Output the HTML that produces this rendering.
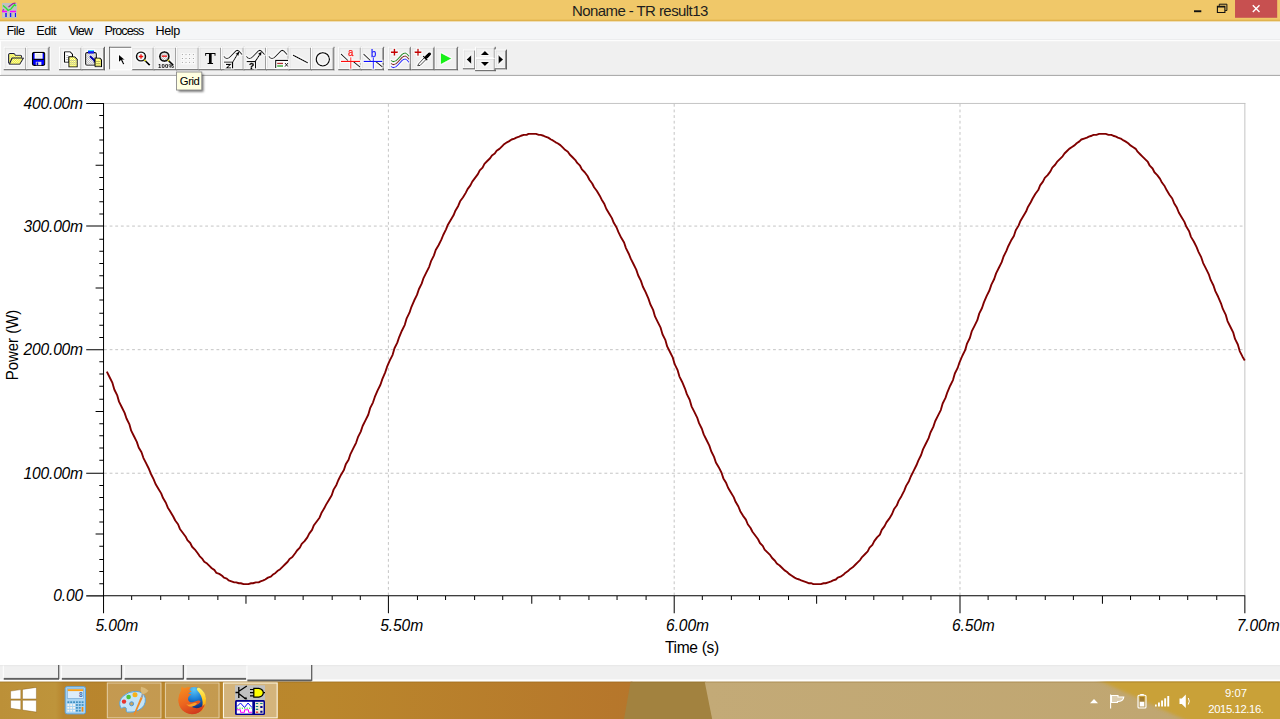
<!DOCTYPE html>
<html><head><meta charset="utf-8"><title>Noname - TR result13</title>
<style>
*{box-sizing:border-box;margin:0;padding:0}
html,body{width:1280px;height:719px;overflow:hidden;background:#fff;font-family:"Liberation Sans",sans-serif}
#art{position:absolute;left:0;top:0}
.t{position:absolute;white-space:nowrap;color:#000;line-height:1}
.t span{display:inline-block;transform-origin:0 50%}
#ttext{left:572px;top:2.5px;font-size:15px;color:#1e1e1e}
.m{top:24.5px;font-size:12.6px}
.yl{position:absolute;left:0;width:82.9px;text-align:right;font-style:italic;font-size:15.6px;line-height:18px;color:#000;letter-spacing:-.2px}
.xl{position:absolute;top:617.3px;font-style:italic;font-size:15.6px;line-height:18px;color:#000;letter-spacing:-.12px}
#xt{position:absolute;left:665px;top:639px;font-size:15.6px;line-height:18px;letter-spacing:-.35px}
#yt{position:absolute;left:-27px;top:336px;width:80px;text-align:center;font-size:16px;line-height:18px;transform:rotate(-90deg) scaleX(.93)}
#tip{left:179.8px;top:75.5px;font-size:11.3px;letter-spacing:-.45px}
#pct{left:158px;top:63.4px;font-size:6px;font-weight:bold;letter-spacing:.15px;opacity:.999}
.ab{font-size:10.5px;top:46.9px;opacity:.999;-webkit-text-stroke:.25px currentColor}
.q{font-size:8.5px;font-weight:bold;opacity:.999;-webkit-text-stroke:.3px #000}
#c1{left:1225px;top:687.7px;font-size:11.3px;color:#fff}
#c2{left:1208.3px;top:704.3px;font-size:11.3px;color:#fff;letter-spacing:-.4px}
</style></head><body>
<svg id="art" width="1280" height="719" viewBox="0 0 1280 719"><g transform="scale(0.937042,0.936198)"><rect x="0" y="0" width="1366" height="23" fill="#f0c869"/><rect x="0" y="21" width="1366" height="2" fill="#e0b34e"/><rect x="0" y="23" width="1366" height="20" fill="#f5f6f7"/><rect x="0" y="42" width="1366" height="1" fill="#e8e9ea"/><rect x="0" y="43" width="1366" height="1" fill="#ffffff"/><rect x="0" y="44" width="1366" height="37" fill="#f0f0f0"/><rect x="0" y="80" width="1366" height="1" fill="#a0a0a0"/><rect x="0" y="44" width="1" height="36" fill="#ffffff"/><rect x="1318" y="0" width="45" height="19" fill="#c75050"/><rect x="4" y="50" width="25" height="25" fill="#f0f0f0"/><rect x="4" y="50" width="24" height="1" fill="#ffffff"/><rect x="4" y="50" width="1" height="24" fill="#ffffff"/><rect x="5" y="51" width="22" height="1" fill="#e2e2e2"/><rect x="5" y="51" width="1" height="22" fill="#e2e2e2"/><rect x="5" y="73" width="22" height="1" fill="#fcfcfc"/><rect x="27" y="51" width="1" height="23" fill="#8a8a8a"/><rect x="4" y="74" width="25" height="1" fill="#505050"/><rect x="28" y="50" width="1" height="25" fill="#5a5a5a"/><rect x="28" y="50" width="25" height="25" fill="#f0f0f0"/><rect x="28" y="50" width="24" height="1" fill="#ffffff"/><rect x="28" y="50" width="1" height="24" fill="#ffffff"/><rect x="29" y="51" width="22" height="1" fill="#e2e2e2"/><rect x="29" y="51" width="1" height="22" fill="#e2e2e2"/><rect x="29" y="73" width="22" height="1" fill="#fcfcfc"/><rect x="51" y="51" width="1" height="23" fill="#8a8a8a"/><rect x="28" y="74" width="25" height="1" fill="#505050"/><rect x="52" y="50" width="1" height="25" fill="#5a5a5a"/><rect x="53" y="51" width="1" height="24" fill="#ffffff"/><rect x="63" y="50" width="25" height="25" fill="#f0f0f0"/><rect x="63" y="50" width="24" height="1" fill="#ffffff"/><rect x="63" y="50" width="1" height="24" fill="#ffffff"/><rect x="64" y="51" width="22" height="1" fill="#e2e2e2"/><rect x="64" y="51" width="1" height="22" fill="#e2e2e2"/><rect x="64" y="73" width="22" height="1" fill="#fcfcfc"/><rect x="86" y="51" width="1" height="23" fill="#8a8a8a"/><rect x="63" y="74" width="25" height="1" fill="#505050"/><rect x="87" y="50" width="1" height="25" fill="#5a5a5a"/><rect x="87" y="50" width="25" height="25" fill="#f0f0f0"/><rect x="87" y="50" width="24" height="1" fill="#ffffff"/><rect x="87" y="50" width="1" height="24" fill="#ffffff"/><rect x="88" y="51" width="22" height="1" fill="#e2e2e2"/><rect x="88" y="51" width="1" height="22" fill="#e2e2e2"/><rect x="88" y="73" width="22" height="1" fill="#fcfcfc"/><rect x="110" y="51" width="1" height="23" fill="#8a8a8a"/><rect x="87" y="74" width="25" height="1" fill="#505050"/><rect x="111" y="50" width="1" height="25" fill="#5a5a5a"/><rect x="112" y="51" width="1" height="24" fill="#ffffff"/><rect x="140" y="50" width="25" height="25" fill="#f0f0f0"/><rect x="140" y="50" width="24" height="1" fill="#ffffff"/><rect x="140" y="50" width="1" height="24" fill="#ffffff"/><rect x="141" y="51" width="22" height="1" fill="#e2e2e2"/><rect x="141" y="51" width="1" height="22" fill="#e2e2e2"/><rect x="141" y="73" width="22" height="1" fill="#fcfcfc"/><rect x="163" y="51" width="1" height="23" fill="#8a8a8a"/><rect x="140" y="74" width="25" height="1" fill="#505050"/><rect x="164" y="50" width="1" height="25" fill="#5a5a5a"/><rect x="164" y="50" width="25" height="25" fill="#f0f0f0"/><rect x="164" y="50" width="24" height="1" fill="#ffffff"/><rect x="164" y="50" width="1" height="24" fill="#ffffff"/><rect x="165" y="51" width="22" height="1" fill="#e2e2e2"/><rect x="165" y="51" width="1" height="22" fill="#e2e2e2"/><rect x="165" y="73" width="22" height="1" fill="#fcfcfc"/><rect x="187" y="51" width="1" height="23" fill="#8a8a8a"/><rect x="164" y="74" width="25" height="1" fill="#505050"/><rect x="188" y="50" width="1" height="25" fill="#5a5a5a"/><rect x="188" y="50" width="25" height="25" fill="#f0f0f0"/><rect x="188" y="50" width="24" height="1" fill="#ffffff"/><rect x="188" y="50" width="1" height="24" fill="#ffffff"/><rect x="189" y="51" width="22" height="1" fill="#e2e2e2"/><rect x="189" y="51" width="1" height="22" fill="#e2e2e2"/><rect x="189" y="73" width="22" height="1" fill="#fcfcfc"/><rect x="211" y="51" width="1" height="23" fill="#8a8a8a"/><rect x="188" y="74" width="25" height="1" fill="#505050"/><rect x="212" y="50" width="1" height="25" fill="#5a5a5a"/><rect x="212" y="50" width="25" height="25" fill="#f0f0f0"/><rect x="212" y="50" width="24" height="1" fill="#ffffff"/><rect x="212" y="50" width="1" height="24" fill="#ffffff"/><rect x="213" y="51" width="22" height="1" fill="#e2e2e2"/><rect x="213" y="51" width="1" height="22" fill="#e2e2e2"/><rect x="213" y="73" width="22" height="1" fill="#fcfcfc"/><rect x="235" y="51" width="1" height="23" fill="#8a8a8a"/><rect x="212" y="74" width="25" height="1" fill="#505050"/><rect x="236" y="50" width="1" height="25" fill="#5a5a5a"/><rect x="236" y="50" width="25" height="25" fill="#f0f0f0"/><rect x="236" y="50" width="24" height="1" fill="#ffffff"/><rect x="236" y="50" width="1" height="24" fill="#ffffff"/><rect x="237" y="51" width="22" height="1" fill="#e2e2e2"/><rect x="237" y="51" width="1" height="22" fill="#e2e2e2"/><rect x="237" y="73" width="22" height="1" fill="#fcfcfc"/><rect x="259" y="51" width="1" height="23" fill="#8a8a8a"/><rect x="236" y="74" width="25" height="1" fill="#505050"/><rect x="260" y="50" width="1" height="25" fill="#5a5a5a"/><rect x="260" y="50" width="25" height="25" fill="#f0f0f0"/><rect x="260" y="50" width="24" height="1" fill="#ffffff"/><rect x="260" y="50" width="1" height="24" fill="#ffffff"/><rect x="261" y="51" width="22" height="1" fill="#e2e2e2"/><rect x="261" y="51" width="1" height="22" fill="#e2e2e2"/><rect x="261" y="73" width="22" height="1" fill="#fcfcfc"/><rect x="283" y="51" width="1" height="23" fill="#8a8a8a"/><rect x="260" y="74" width="25" height="1" fill="#505050"/><rect x="284" y="50" width="1" height="25" fill="#5a5a5a"/><rect x="284" y="50" width="25" height="25" fill="#f0f0f0"/><rect x="284" y="50" width="24" height="1" fill="#ffffff"/><rect x="284" y="50" width="1" height="24" fill="#ffffff"/><rect x="285" y="51" width="22" height="1" fill="#e2e2e2"/><rect x="285" y="51" width="1" height="22" fill="#e2e2e2"/><rect x="285" y="73" width="22" height="1" fill="#fcfcfc"/><rect x="307" y="51" width="1" height="23" fill="#8a8a8a"/><rect x="284" y="74" width="25" height="1" fill="#505050"/><rect x="308" y="50" width="1" height="25" fill="#5a5a5a"/><rect x="308" y="50" width="25" height="25" fill="#f0f0f0"/><rect x="308" y="50" width="24" height="1" fill="#ffffff"/><rect x="308" y="50" width="1" height="24" fill="#ffffff"/><rect x="309" y="51" width="22" height="1" fill="#e2e2e2"/><rect x="309" y="51" width="1" height="22" fill="#e2e2e2"/><rect x="309" y="73" width="22" height="1" fill="#fcfcfc"/><rect x="331" y="51" width="1" height="23" fill="#8a8a8a"/><rect x="308" y="74" width="25" height="1" fill="#505050"/><rect x="332" y="50" width="1" height="25" fill="#5a5a5a"/><rect x="332" y="50" width="25" height="25" fill="#f0f0f0"/><rect x="332" y="50" width="24" height="1" fill="#ffffff"/><rect x="332" y="50" width="1" height="24" fill="#ffffff"/><rect x="333" y="51" width="22" height="1" fill="#e2e2e2"/><rect x="333" y="51" width="1" height="22" fill="#e2e2e2"/><rect x="333" y="73" width="22" height="1" fill="#fcfcfc"/><rect x="355" y="51" width="1" height="23" fill="#8a8a8a"/><rect x="332" y="74" width="25" height="1" fill="#505050"/><rect x="356" y="50" width="1" height="25" fill="#5a5a5a"/><rect x="357" y="51" width="1" height="24" fill="#ffffff"/><rect x="361" y="50" width="25" height="25" fill="#f0f0f0"/><rect x="361" y="50" width="24" height="1" fill="#ffffff"/><rect x="361" y="50" width="1" height="24" fill="#ffffff"/><rect x="362" y="51" width="22" height="1" fill="#e2e2e2"/><rect x="362" y="51" width="1" height="22" fill="#e2e2e2"/><rect x="362" y="73" width="22" height="1" fill="#fcfcfc"/><rect x="384" y="51" width="1" height="23" fill="#8a8a8a"/><rect x="361" y="74" width="25" height="1" fill="#505050"/><rect x="385" y="50" width="1" height="25" fill="#5a5a5a"/><rect x="385" y="50" width="25" height="25" fill="#f0f0f0"/><rect x="385" y="50" width="24" height="1" fill="#ffffff"/><rect x="385" y="50" width="1" height="24" fill="#ffffff"/><rect x="386" y="51" width="22" height="1" fill="#e2e2e2"/><rect x="386" y="51" width="1" height="22" fill="#e2e2e2"/><rect x="386" y="73" width="22" height="1" fill="#fcfcfc"/><rect x="408" y="51" width="1" height="23" fill="#8a8a8a"/><rect x="385" y="74" width="25" height="1" fill="#505050"/><rect x="409" y="50" width="1" height="25" fill="#5a5a5a"/><rect x="410" y="51" width="1" height="24" fill="#ffffff"/><rect x="414" y="50" width="25" height="25" fill="#f0f0f0"/><rect x="414" y="50" width="24" height="1" fill="#ffffff"/><rect x="414" y="50" width="1" height="24" fill="#ffffff"/><rect x="415" y="51" width="22" height="1" fill="#e2e2e2"/><rect x="415" y="51" width="1" height="22" fill="#e2e2e2"/><rect x="415" y="73" width="22" height="1" fill="#fcfcfc"/><rect x="437" y="51" width="1" height="23" fill="#8a8a8a"/><rect x="414" y="74" width="25" height="1" fill="#505050"/><rect x="438" y="50" width="1" height="25" fill="#5a5a5a"/><rect x="439" y="50" width="25" height="25" fill="#f0f0f0"/><rect x="439" y="50" width="24" height="1" fill="#ffffff"/><rect x="439" y="50" width="1" height="24" fill="#ffffff"/><rect x="440" y="51" width="22" height="1" fill="#e2e2e2"/><rect x="440" y="51" width="1" height="22" fill="#e2e2e2"/><rect x="440" y="73" width="22" height="1" fill="#fcfcfc"/><rect x="462" y="51" width="1" height="23" fill="#8a8a8a"/><rect x="439" y="74" width="25" height="1" fill="#505050"/><rect x="463" y="50" width="1" height="25" fill="#5a5a5a"/><rect x="464" y="50" width="25" height="25" fill="#f0f0f0"/><rect x="464" y="50" width="24" height="1" fill="#ffffff"/><rect x="464" y="50" width="1" height="24" fill="#ffffff"/><rect x="465" y="51" width="22" height="1" fill="#e2e2e2"/><rect x="465" y="51" width="1" height="22" fill="#e2e2e2"/><rect x="465" y="73" width="22" height="1" fill="#fcfcfc"/><rect x="487" y="51" width="1" height="23" fill="#8a8a8a"/><rect x="464" y="74" width="25" height="1" fill="#505050"/><rect x="488" y="50" width="1" height="25" fill="#5a5a5a"/><rect x="489" y="51" width="1" height="24" fill="#ffffff"/><rect x="116.6" y="50" width="24.4" height="25" fill="#f8f8f8"/><rect x="116.6" y="50" width="23.4" height="1.1" fill="#505050"/><rect x="116.6" y="50" width="1.15" height="24" fill="#505050"/><rect x="117.6" y="51" width="22.4" height="1" fill="#ffffff"/><rect x="117.6" y="51" width="1" height="23" fill="#ffffff"/><rect x="117.6" y="74" width="23.4" height="1" fill="#ffffff"/><rect x="140" y="51" width="1" height="24" fill="#ffffff"/><rect x="494" y="53" width="14" height="21" fill="#f0f0f0"/><rect x="494" y="53" width="13" height="1" fill="#ffffff"/><rect x="494" y="53" width="1" height="20" fill="#ffffff"/><rect x="495" y="54" width="11" height="1" fill="#e2e2e2"/><rect x="495" y="54" width="1" height="18" fill="#e2e2e2"/><rect x="495" y="72" width="11" height="1" fill="#fcfcfc"/><rect x="506" y="54" width="1" height="19" fill="#8a8a8a"/><rect x="494" y="73" width="14" height="1" fill="#505050"/><rect x="507" y="53" width="1" height="21" fill="#5a5a5a"/><rect x="507" y="50" width="22" height="13" fill="#f0f0f0"/><rect x="507" y="50" width="21" height="1" fill="#ffffff"/><rect x="507" y="50" width="1" height="12" fill="#ffffff"/><rect x="508" y="51" width="19" height="1" fill="#e2e2e2"/><rect x="508" y="51" width="1" height="10" fill="#e2e2e2"/><rect x="508" y="61" width="19" height="1" fill="#fcfcfc"/><rect x="527" y="51" width="1" height="11" fill="#8a8a8a"/><rect x="507" y="62" width="22" height="1" fill="#505050"/><rect x="528" y="50" width="1" height="13" fill="#5a5a5a"/><rect x="507" y="62" width="22" height="14" fill="#f0f0f0"/><rect x="507" y="62" width="21" height="1" fill="#ffffff"/><rect x="507" y="62" width="1" height="13" fill="#ffffff"/><rect x="508" y="63" width="19" height="1" fill="#e2e2e2"/><rect x="508" y="63" width="1" height="11" fill="#e2e2e2"/><rect x="508" y="74" width="19" height="1" fill="#fcfcfc"/><rect x="527" y="63" width="1" height="12" fill="#8a8a8a"/><rect x="507" y="75" width="22" height="1" fill="#505050"/><rect x="528" y="62" width="1" height="14" fill="#5a5a5a"/><rect x="528" y="53" width="13" height="21" fill="#f0f0f0"/><rect x="528" y="53" width="12" height="1" fill="#ffffff"/><rect x="528" y="53" width="1" height="20" fill="#ffffff"/><rect x="529" y="54" width="10" height="1" fill="#e2e2e2"/><rect x="529" y="54" width="1" height="18" fill="#e2e2e2"/><rect x="529" y="72" width="10" height="1" fill="#fcfcfc"/><rect x="539" y="54" width="1" height="19" fill="#8a8a8a"/><rect x="528" y="73" width="13" height="1" fill="#505050"/><rect x="540" y="53" width="1" height="21" fill="#5a5a5a"/><path d="M110 110.5H1329M1328.5 110V636" stroke="#c0c0c0" fill="none"/><path d="M111 505.5H1328M111 373.5H1328M111 241.5H1328M414.5 111V636M719.5 111V636M1024.5 111V636" stroke="#c0c0c0" stroke-dasharray="3 3" fill="none"/><path d="M110.5 110V655M92 636.35H1329M92 636.5H110M106 623.5H110M106 610.5H110M106 597.5H110M106 583.5H110M102 570.5H110M106 557.5H110M106 544.5H110M106 531.5H110M106 518.5H110M92 505.5H110M106 491.5H110M106 478.5H110M106 465.5H110M106 452.5H110M102 439.5H110M106 426.5H110M106 412.5H110M106 399.5H110M106 386.5H110M92 373.5H110M106 360.5H110M106 347.5H110M106 334.5H110M106 320.5H110M102 307.5H110M106 294.5H110M106 281.5H110M106 268.5H110M106 255.5H110M92 241.5H110M106 228.5H110M106 215.5H110M106 202.5H110M106 189.5H110M102 176.5H110M106 163.5H110M106 149.5H110M106 136.5H110M106 123.5H110M92 110.5H110M110.5 636V655M140.5 636V641M171.5 636V641M201.5 636V641M232.5 636V641M262.5 636V645M293.5 636V641M323.5 636V641M354.5 636V641M384.5 636V641M414.5 636V655M445.5 636V641M475.5 636V641M506.5 636V641M536.5 636V641M567.5 636V645M597.5 636V641M628.5 636V641M658.5 636V641M689.5 636V641M719.5 636V655M749.5 636V641M780.5 636V641M810.5 636V641M841.5 636V641M871.5 636V645M902.5 636V641M932.5 636V641M963.5 636V641M993.5 636V641M1024.5 636V655M1054.5 636V641M1084.5 636V641M1115.5 636V641M1145.5 636V641M1176.5 636V645M1206.5 636V641M1237.5 636V641M1267.5 636V641M1298.5 636V641M1328.5 636V655" stroke="#000" stroke-width="1.07" fill="none"/><path d="M114 397 L117 403 L120 409 L122 416 L125 422 L127 429 L130 435 L133 441 L135 447 L138 453 L140 460 L143 466 L146 472 L148 478 L151 483 L153 489 L156 495 L159 501 L161 506 L164 512 L166 517 L169 522 L172 527 L174 532 L177 537 L179 542 L182 547 L185 552 L187 556 L190 560 L192 565 L195 569 L198 573 L200 577 L203 580 L205 584 L208 587 L211 591 L213 594 L216 597 L218 600 L221 602 L224 605 L226 607 L229 609 L231 612 L234 613 L237 615 L239 617 L242 618 L244 620 L247 621 L250 622 L252 622 L255 623 L257 623 L260 624 L263 624 L265 624 L268 623 L270 623 L273 622 L276 622 L278 621 L281 620 L283 619 L286 617 L289 616 L291 614 L294 612 L296 610 L299 608 L302 605 L304 603 L307 600 L309 597 L312 595 L315 591 L317 588 L320 585 L322 581 L325 578 L328 574 L330 570 L333 566 L335 561 L338 557 L341 553 L343 548 L346 543 L348 539 L351 534 L354 529 L356 523 L359 518 L361 513 L364 507 L367 502 L369 496 L372 491 L374 485 L377 479 L380 473 L382 467 L385 461 L387 455 L390 449 L393 443 L395 436 L398 430 L400 424 L403 417 L406 411 L408 405 L411 398 L413 392 L416 385 L419 379 L421 372 L424 366 L426 360 L429 353 L432 347 L434 340 L437 334 L439 328 L442 321 L445 315 L447 309 L450 303 L452 297 L455 291 L458 285 L460 279 L463 273 L465 267 L468 262 L471 256 L473 251 L476 245 L478 240 L481 235 L484 230 L486 225 L489 220 L491 215 L494 211 L497 206 L499 202 L502 198 L504 194 L507 190 L510 186 L512 182 L515 179 L517 175 L520 172 L523 169 L525 166 L528 164 L530 161 L533 159 L536 156 L538 154 L541 152 L543 151 L546 149 L549 148 L551 147 L554 146 L556 145 L559 144 L562 144 L564 143 L567 143 L569 143 L572 143 L575 144 L577 144 L580 145 L582 146 L585 147 L588 149 L590 150 L593 152 L595 153 L598 155 L601 158 L603 160 L606 162 L608 165 L611 168 L614 171 L616 174 L619 177 L621 181 L624 184 L627 188 L629 192 L632 196 L634 200 L637 204 L640 209 L642 213 L645 218 L647 223 L650 228 L653 233 L655 238 L658 243 L660 248 L663 254 L666 259 L668 265 L671 271 L673 276 L676 282 L679 288 L681 294 L684 300 L686 306 L689 312 L692 319 L694 325 L697 331 L699 338 L702 344 L705 350 L707 357 L710 363 L712 370 L715 376 L718 382 L720 389 L723 395 L725 402 L728 408 L731 415 L733 421 L736 427 L738 434 L741 440 L744 446 L746 452 L749 458 L751 464 L754 470 L757 476 L759 482 L762 488 L764 494 L767 499 L770 505 L772 511 L775 516 L777 521 L780 526 L783 531 L785 536 L788 541 L790 546 L793 551 L796 555 L798 560 L801 564 L803 568 L806 572 L809 576 L811 580 L814 583 L816 587 L819 590 L822 593 L824 596 L827 599 L829 602 L832 604 L835 607 L837 609 L840 611 L842 613 L845 615 L848 617 L850 618 L853 619 L855 620 L858 621 L861 622 L863 623 L866 623 L868 624 L871 624 L874 624 L876 624 L879 623 L881 623 L884 622 L887 621 L889 620 L892 619 L894 617 L897 616 L900 614 L902 612 L905 610 L907 608 L910 606 L913 603 L915 601 L918 598 L920 595 L923 592 L926 589 L928 585 L931 582 L933 578 L936 574 L939 571 L941 566 L944 562 L946 558 L949 554 L952 549 L954 544 L957 540 L959 535 L962 530 L965 524 L967 519 L970 514 L972 509 L975 503 L978 497 L980 492 L983 486 L985 480 L988 474 L991 468 L993 462 L996 456 L998 450 L1001 444 L1004 438 L1006 431 L1009 425 L1011 419 L1014 412 L1017 406 L1019 399 L1022 393 L1024 387 L1027 380 L1030 374 L1032 367 L1035 361 L1037 354 L1040 348 L1043 342 L1045 335 L1048 329 L1050 323 L1053 316 L1056 310 L1058 304 L1061 298 L1063 292 L1066 286 L1069 280 L1071 274 L1074 268 L1076 263 L1079 257 L1082 252 L1084 246 L1087 241 L1089 236 L1092 231 L1095 226 L1097 221 L1100 216 L1102 212 L1105 207 L1108 203 L1110 198 L1113 194 L1115 190 L1118 187 L1121 183 L1123 179 L1126 176 L1128 173 L1131 170 L1134 167 L1136 164 L1139 161 L1141 159 L1144 157 L1147 155 L1149 153 L1152 151 L1154 149 L1157 148 L1160 147 L1162 146 L1165 145 L1167 144 L1170 144 L1173 143 L1175 143 L1178 143 L1180 143 L1183 144 L1186 144 L1188 145 L1191 146 L1193 147 L1196 148 L1199 150 L1201 151 L1204 153 L1206 155 L1209 157 L1212 159 L1214 162 L1217 165 L1219 167 L1222 170 L1225 173 L1227 177 L1230 180 L1232 184 L1235 187 L1238 191 L1240 195 L1243 199 L1245 203 L1248 208 L1251 212 L1253 217 L1256 222 L1258 227 L1261 232 L1264 237 L1266 242 L1269 247 L1271 253 L1274 258 L1277 264 L1279 269 L1282 275 L1284 281 L1287 287 L1290 293 L1292 299 L1295 305 L1297 311 L1300 317 L1303 324 L1305 330 L1308 336 L1310 343 L1313 349 L1316 355 L1318 362 L1321 368 L1323 375 L1326 381 L1328.4 385" stroke="#800000" stroke-width="2" fill="none" stroke-linejoin="round"/><rect x="0" y="710.6" width="1366" height="15.4" fill="#f0f0f0"/><rect x="0" y="710.6" width="1366" height="1" fill="#e6e6e6"/><rect x="0" y="726" width="1366" height="2" fill="#ffffff"/><rect x="3" y="711" width="1" height="14" fill="#ffffff"/><rect x="4" y="724.1" width="59" height="2" fill="#606060"/><rect x="62" y="710.3" width="1.3" height="15" fill="#555"/><rect x="65" y="711" width="1" height="14" fill="#ffffff"/><rect x="66" y="724.1" width="64" height="2" fill="#606060"/><rect x="129" y="710.3" width="1.3" height="15" fill="#555"/><rect x="132" y="711" width="1" height="14" fill="#ffffff"/><rect x="133" y="724.1" width="63" height="2" fill="#606060"/><rect x="195" y="710.3" width="1.3" height="15" fill="#555"/><rect x="198" y="711" width="1" height="14" fill="#ffffff"/><rect x="199" y="724.1" width="64" height="2" fill="#606060"/><rect x="263" y="710.3" width="69" height="17" fill="#f0f0f0"/><rect x="263" y="711" width="1" height="15" fill="#ffffff"/><rect x="264" y="725.8" width="68.5" height="2.2" fill="#606060"/><rect x="332" y="710.3" width="1.3" height="17" fill="#555"/><defs><linearGradient id="tg" x1="0" x2="1" y1="0" y2="0"><stop offset="0" stop-color="#bc9038"/><stop offset=".088" stop-color="#be943b"/><stop offset=".1" stop-color="#b8852e"/><stop offset=".5" stop-color="#ba872c"/><stop offset="1" stop-color="#b6762b"/></linearGradient><linearGradient id="tg2" x1="0" x2="1" y1="0" y2="0"><stop offset="0" stop-color="#c3aa77"/><stop offset="1" stop-color="#bfa56f"/></linearGradient><linearGradient id="tg3" gradientUnits="userSpaceOnUse" x1="1180" y1="728" x2="1164" y2="762"><stop offset="0" stop-color="#c9a139"/><stop offset=".5" stop-color="#c8a444" stop-opacity=".9"/><stop offset="1" stop-color="#c4a664" stop-opacity="0"/></linearGradient><filter id="b3" x="-10%" y="-10%" width="120%" height="120%"><feGaussianBlur stdDeviation="3.5 1"/></filter><clipPath id="tc"><rect x="0" y="728" width="1366" height="40"/></clipPath></defs><g clip-path="url(#tc)"><rect x="0" y="728" width="1366" height="40" fill="#c2a873"/><rect x="0" y="728" width="675" height="40" fill="url(#tg)"/><path d="M673 728h80l8 40h-95z" fill="#a2823f"/><path d="M752 728h630v40h-622z" fill="url(#tg2)"/><path d="M1114.6 700H1424V800H1332z" fill="#c9a139" filter="url(#b3)"/></g><rect x="0" y="728" width="1366" height="1" fill="rgba(120,80,10,.3)"/><rect x="114.5" y="729.5" width="57.3" height="37.3" fill="rgba(255,255,255,0.17)" stroke="rgba(255,250,235,0.62)" stroke-width="1"/><rect x="176.5" y="729.5" width="57.3" height="37.3" fill="rgba(255,255,255,0.17)" stroke="rgba(255,250,235,0.62)" stroke-width="1"/><rect x="238.5" y="729.5" width="57.3" height="37.3" fill="rgba(255,255,255,0.38)" stroke="rgba(255,250,235,0.95)" stroke-width="1.2"/></g><g><rect x="2" y="3" width="15" height="15" fill="#c0c0c0"/><path d="M3 5.5l3.5 3 1.5 2 3-1.5 3.5-4.5 1.5 1.5" stroke="#2fe02f" stroke-width="1.3" fill="none"/><path d="M2.5 10.5l1.5-1M8.5 7l4.5-3.5 2.5-.3" stroke="#a020a0" stroke-width="1.2" fill="none"/><path d="M2 11.5h5M10 11.5h6" stroke="#f0f" stroke-width="1.4"/><path d="M6 13v4M10.5 13v4M15.5 13v4" stroke="#1a1aff" stroke-width="1.5"/><path d="M4 13v4M7.8 13v4M9 13v4M14 13v4M16.6 13v4" stroke="#e6dca0" stroke-width=".8"/></g><rect x="1194" y="10.3" width="7.3" height="1.9" fill="#111"/><path d="M1217.4 6.3h7.5v6.2h-7.5z" fill="none" stroke="#111" stroke-width="1.1"/><path d="M1217.4 6.8h7.5" stroke="#111" stroke-width="1.4"/><path d="M1219.3 5.8v-1.6h7.6v6.3h-1.7" fill="none" stroke="#111" stroke-width="1"/><path d="M1252.8 5.3l6.7 6.7m0-6.7l-6.7 6.7" stroke="#fff" stroke-width="1.4" fill="none"/><defs><filter id="halo" x="-5%" y="-30%" width="110%" height="160%"><feMorphology in="SourceAlpha" operator="dilate" radius=".7" result="d"/><feFlood flood-color="#fff" flood-opacity=".7"/><feComposite in2="d" operator="in"/><feGaussianBlur stdDeviation=".35"/><feMerge><feMergeNode/><feMergeNode in="SourceGraphic"/></feMerge></filter></defs><g filter="url(#halo)"><defs><pattern id="dy" width="1.874" height="1.874" patternUnits="userSpaceOnUse"><rect width="1.874" height="1.874" fill="#ffff00"/><rect x=".937" width=".937" height=".937" fill="#e8e8e8"/><rect y=".937" width=".937" height=".937" fill="#e8e8e8"/></pattern><pattern id="dw" width="1.874" height="1.874" patternUnits="userSpaceOnUse"><rect width="1.874" height="1.874" fill="#ffffff"/><rect x=".937" width=".937" height=".937" fill="#b8b8b8"/><rect y=".937" width=".937" height=".937" fill="#b8b8b8"/></pattern><pattern id="dyw" width="1.874" height="1.874" patternUnits="userSpaceOnUse"><rect width="1.874" height="1.874" fill="#ffffff"/><rect x=".937" width=".937" height=".937" fill="#ffff00"/><rect y=".937" width=".937" height=".937" fill="#ffff00"/></pattern></defs><g stroke="#15153a" stroke-width="1.1" stroke-linejoin="round"><path d="M8.6 63.5V54.5q0-1 1-1h4q1 0 1.5 1l.5.8h5q1 0 1 1v1.5" fill="url(#dy)"/><path d="M9.3 64.3l2.8-6.3h11.5l-3.8 6.3z" fill="url(#dy)"/></g><g><rect x="32.5" y="52.5" width="12.2" height="12.8" rx="1.2" fill="#0000ff" stroke="#000" stroke-width="1.3"/><rect x="34.6" y="53" width="8" height="5.8" fill="#fff"/><rect x="35.6" y="54" width="6" height="3.8" fill="#ececec"/><path d="M33.5 59.4h10.2" stroke="#000" stroke-width="1.1"/><rect x="35.8" y="61.8" width="5.6" height="3.4" fill="#e8e8e8"/><rect x="36.6" y="62.4" width="1.6" height="2.8" fill="#00c"/></g><g stroke="#000" stroke-width="1.1" stroke-linejoin="round"><path d="M64.5 51.8h5.8l2.2 2.3v8.2h-8z" fill="#fff"/><path d="M68.8 56.8h6l2.5 2.5v7.7h-8.5z" fill="url(#dyw)"/></g><path d="M66.3 55.5h2M66.3 57.5h1.5M66.3 59.5h1.5" stroke="#999" stroke-width=".8"/><path d="M69.8 60.4h6.8M69.8 62.3h6.8M69.8 64.2h6.8" stroke="#a8a8a8" stroke-width=".6"/><g stroke-linejoin="round"><rect x="85.6" y="52.6" width="10.8" height="12.6" rx="1.2" fill="url(#dw)" stroke="#111" stroke-width="1.1"/><rect x="88" y="50.2" width="6" height="3.3" rx=".8" fill="#1414f0"/><rect x="88.4" y="50" width="5.2" height="1.2" fill="#2fe8f8"/><path d="M90 56.3l5.3 5" stroke="#0000b0" stroke-width="1.9"/><path d="M96.5 62.5l-3.5-.3 3-3z" fill="#0000b0"/><path d="M95 58h4.8l1.7 1.7v7h-6.5z" fill="url(#dyw)" stroke="#000" stroke-width="1.1"/><path d="M96 61.5h4.5M96 63.5h4.5M96 65.3h4.5" stroke="#a09a50" stroke-width=".7"/></g><path d="M119 54.8v7.2l1.9-1.7 2.1 4.3 1.4-.7-2-4.1 2.4-.1z" fill="#000"/><g><circle cx="141" cy="56.5" r="4.5" fill="#f0ffff" stroke="#111" stroke-width="1.6"/><path d="M144.3 59.9l5.5 5.3" stroke="#000" stroke-width="2"/><path d="M144.3 59.7l1.4 1.4" stroke="#e8e020" stroke-width="1.6"/><path d="M138.8 56.5h4.4M141 54.2v4.5" stroke="#f01010" stroke-width="1.3"/></g><g><circle cx="164.4" cy="56.5" r="4.6" fill="url(#dw)" stroke="#111" stroke-width="1.8"/><path d="M167.8 60l5.5 5.3" stroke="#000" stroke-width="2"/><path d="M167.8 59.8l1.4 1.4" stroke="#e8e020" stroke-width="1.6"/><rect x="161.8" y="55.5" width="5.2" height="1.3" fill="#f01010"/></g><rect x="182.5" y="54.7" width="1" height="1" fill="#fff"/><rect x="181.9" y="54.1" width="1" height="1" fill="#9a9a9a"/><rect x="182.5" y="58.6" width="1" height="1" fill="#fff"/><rect x="181.9" y="58" width="1" height="1" fill="#9a9a9a"/><rect x="182.5" y="62.5" width="1" height="1" fill="#fff"/><rect x="181.9" y="61.9" width="1" height="1" fill="#9a9a9a"/><rect x="186.1" y="54.7" width="1" height="1" fill="#fff"/><rect x="185.5" y="54.1" width="1" height="1" fill="#9a9a9a"/><rect x="186.1" y="58.6" width="1" height="1" fill="#fff"/><rect x="185.5" y="58" width="1" height="1" fill="#9a9a9a"/><rect x="186.1" y="62.5" width="1" height="1" fill="#fff"/><rect x="185.5" y="61.9" width="1" height="1" fill="#9a9a9a"/><rect x="189.7" y="54.7" width="1" height="1" fill="#fff"/><rect x="189.1" y="54.1" width="1" height="1" fill="#9a9a9a"/><rect x="189.7" y="58.6" width="1" height="1" fill="#fff"/><rect x="189.1" y="58" width="1" height="1" fill="#9a9a9a"/><rect x="189.7" y="62.5" width="1" height="1" fill="#fff"/><rect x="189.1" y="61.9" width="1" height="1" fill="#9a9a9a"/><rect x="193.5" y="54.7" width="1" height="1" fill="#fff"/><rect x="192.9" y="54.1" width="1" height="1" fill="#9a9a9a"/><rect x="193.5" y="58.6" width="1" height="1" fill="#fff"/><rect x="192.9" y="58" width="1" height="1" fill="#9a9a9a"/><rect x="193.5" y="62.5" width="1" height="1" fill="#fff"/><rect x="192.9" y="61.9" width="1" height="1" fill="#9a9a9a"/><path d="M223.8 56.2q1.5 2.3 3.2 2.3q1.6 0 3.6-2.2l5.2-5.3q1.5-1.2 3 0l3.4 3.6" stroke="#111" stroke-width="1.1" fill="none"/><path d="M232.8 62l4.6-7.6" stroke="#000" stroke-width="1.2"/><path d="M239.4 51.2l-4 2.5 3.2 2.3z" fill="#000"/><path d="M224 62.1h9M232.6 61.5v7" stroke="#000" stroke-width="1.3"/><path d="M226 64.3h4.5l-3.8 3.5h4.3" stroke="#000" stroke-width="1.2" fill="none"/><path d="M246.3 56.2q1.5 2.3 3.2 2.3q1.6 0 3.6-2.2l5.2-5.3q1.5-1.2 3 0l3.4 3.6" stroke="#111" stroke-width="1.1" fill="none"/><path d="M255.3 61.3l4.6-7" stroke="#000" stroke-width="1.2"/><path d="M261.9 51.2l-4 2.5 3.2 2.3z" fill="#000"/><path d="M246.5 61.6h9M255.5 60.5v8" stroke="#111" stroke-width="1.1"/><path d="M268.8 56.2q1.5 2.3 3.2 2.3q1.6 0 3.6-2.2l5.2-5.3q1.5-1.2 3 0l3.4 3.6" stroke="#111" stroke-width="1.1" fill="none"/><path d="M275.7 68v-7.6h12.3" stroke="#111" stroke-width="1.3" fill="none"/><rect x="276.5" y="61.2" width="11.5" height="7" fill="#fff"/><rect x="277.2" y="62.8" width="5.8" height="1.3" fill="#b03030"/><rect x="277.2" y="65.2" width="5.8" height="1.6" fill="#4cae4c"/><path d="M285 63l3 3.6M288 63l-3 3.6" stroke="#111" stroke-width=".9"/><path d="M293 55.2l14.8 7.7" stroke="#000" stroke-width="1.3"/><circle cx="322.8" cy="59.3" r="6.6" fill="none" stroke="#111" stroke-width="1.5"/><path d="M341 54l7 6.6M353.5 61.8l6.5 5.2" stroke="#111" stroke-width="1.1"/><path d="M341 61.4h19M350.8 57.3v11.5" stroke="#ff1010" stroke-width="1.2"/><path d="M363.5 54l7 6.6M376 61.8l6.5 5.2" stroke="#111" stroke-width="1.1"/><path d="M363.5 61.4h19M373.3 57.3v11.5" stroke="#1010ff" stroke-width="1.2"/><path d="M390.9 52.2h7M394.4 48.7v7" stroke="#c80000" stroke-width="1.7"/><path d="M391 60.3q1.5 1.5 3 1.2q2-.4 4-2.7l4-4.3q1.8-1.8 3.8-1.3q1.5.5 3.2 3.2" stroke="#149614" stroke-width="1.2" fill="none"/><path d="M391 63.3q1.5 1.5 3 1.2q2-.4 4-2.7l4-4.3q1.8-1.8 3.8-1.3q1.5.5 3.2 3.2" stroke="#8a1414" stroke-width="1.2" fill="none"/><path d="M391 66.3q1.5 1.5 3 1.2q2-.4 4-2.7l4-4.3q1.8-1.8 3.8-1.3q1.5.5 3.2 3.2" stroke="#2828ff" stroke-width="1.2" fill="none"/><path d="M414.5 52.2h7M418 48.7v7" stroke="#c80000" stroke-width="1.7"/><path d="M417.6 65.8l1-2 5.8-6.2 1.8 1.8-6 6z" fill="#fff" stroke="#111" stroke-width=".9"/><path d="M424.2 57.4l1.2-2 3.3-3q1.2-.6 2 .3q.9.9.3 2l-3 3.3-2 1.2z" fill="#000"/><path d="M423.2 56l4.2 4.2" stroke="#000" stroke-width="1.6"/><path d="M440.8 53v11.2l10.6-5.7z" fill="#14f014"/><path d="M466.6 59.4l4.7-4.5v9.1z" fill="#000"/><path d="M503.2 59.4l-4.8-4.5v9.1z" fill="#000"/><path d="M484.9 50.7l4.3 4.3h-8.6z" fill="#000"/><path d="M484.9 66.3l4.3-4.4h-8.6z" fill="#000"/></g><rect x="178.5" y="74.2" width="25" height="17.6" fill="rgba(0,0,0,.55)" filter="url(#bl2)"/><rect x="176.5" y="72" width="25.3" height="18" fill="#ffffe1" stroke="#8c8c8c" stroke-width=".9"/><path d="M10.6 691.1l10.2-1.5v9.3h-10.2zM22.5 689.4l13.9-2v11.5h-13.9zM10.6 700.3h10.2v9.5l-10.2-1.5zM22.5 700.3h13.9v11.8l-13.9-2.1z" fill="#fff" stroke="rgba(120,75,0,.5)" stroke-width=".7"/><g><rect x="65.2" y="686.7" width="20.3" height="27.2" rx="1.8" fill="#a9d4f3" stroke="#5da2da" stroke-width="1"/><rect x="67.3" y="688.8" width="16.2" height="9.8" fill="#dcecfa" stroke="#7fb0d8" stroke-width=".8"/><rect x="67.7" y="689.2" width="15.4" height="1.9" fill="#f9a11b"/><text x="79" y="697.3" font-family="Liberation Sans,sans-serif" font-size="6.5" font-weight="bold" fill="#3d6fb4">8</text><rect x="67.4" y="701.3" width="1.9" height="1.7" fill="#3f8fc0"/><rect x="70.25" y="701.3" width="1.9" height="1.7" fill="#3f8fc0"/><rect x="73.1" y="701.3" width="1.9" height="1.7" fill="#3f8fc0"/><rect x="75.95" y="701.3" width="1.9" height="1.7" fill="#3f8fc0"/><rect x="78.8" y="701.3" width="1.9" height="1.7" fill="#3f8fc0"/><rect x="81.65" y="701.3" width="1.9" height="1.7" fill="#3f8fc0"/><rect x="67.4" y="704.15" width="1.9" height="1.7" fill="#fdf6ee"/><rect x="70.25" y="704.15" width="1.9" height="1.7" fill="#fdf6ee"/><rect x="73.1" y="704.15" width="1.9" height="1.7" fill="#fdf6ee"/><rect x="75.95" y="704.15" width="1.9" height="1.7" fill="#3f8fc0"/><rect x="78.8" y="704.15" width="1.9" height="1.7" fill="#3f8fc0"/><rect x="81.65" y="704.15" width="1.9" height="1.7" fill="#3f8fc0"/><rect x="67.4" y="707" width="1.9" height="1.7" fill="#fdf6ee"/><rect x="70.25" y="707" width="1.9" height="1.7" fill="#fdf6ee"/><rect x="73.1" y="707" width="1.9" height="1.7" fill="#fdf6ee"/><rect x="75.95" y="707" width="1.9" height="1.7" fill="#3f8fc0"/><rect x="78.8" y="707" width="1.9" height="1.7" fill="#3f8fc0"/><rect x="67.4" y="709.85" width="1.9" height="1.7" fill="#fdf6ee"/><rect x="70.25" y="709.85" width="1.9" height="1.7" fill="#fdf6ee"/><rect x="73.1" y="709.85" width="1.9" height="1.7" fill="#fdf6ee"/><rect x="75.95" y="709.85" width="1.9" height="1.7" fill="#3f8fc0"/><rect x="78.8" y="709.85" width="1.9" height="1.7" fill="#3f8fc0"/><rect x="81.65" y="707" width="1.7" height="4.6" fill="#f58a10"/></g><g><path d="M120.5 707.3q-2.5-6 2.5-11q5.5-5 13-5q8 .5 9.3 7q1 8-7 12q-5 2.5-11 1.8q-1.5-.5-1-2.5q.4-1.7-1.2-2.3q-1.6-.3-2.8.7q-1.3.6-1.8-.7z" fill="#c4e4f7" stroke="#5aa5dc" stroke-width="1"/><circle cx="124" cy="701.6" r="2.2" fill="#e8342c"/><circle cx="128.6" cy="697" r="2.3" fill="#4cc23a"/><circle cx="135" cy="694.8" r="2.5" fill="#f7b21c"/><circle cx="131.6" cy="703.8" r="2" fill="#c9a560" stroke="#4d97d4" stroke-width="1"/><path d="M133.5 714.5l7.2-17.5 2 .8-7.8 17.2z" fill="#f08a24"/><path d="M140.8 697l1.2-3.7 1.8.6-1 3.9z" fill="#9aa0a8"/><path d="M141.6 693.4q-1.5-3-.6-6.6q4 .3 7.6 4q-2.5 3-5.3 3.4z" fill="#d9b877"/></g><defs><radialGradient id="fg" cx=".5" cy=".12" r=".95"><stop offset="0" stop-color="#5cc6f6"/><stop offset=".45" stop-color="#1d7fd6"/><stop offset=".8" stop-color="#103a8c"/><stop offset="1" stop-color="#0a2360"/></radialGradient><linearGradient id="fo" x1=".2" x2=".6" y1="0" y2="1"><stop offset="0" stop-color="#f78d1f"/><stop offset=".55" stop-color="#ec651e"/><stop offset="1" stop-color="#cf3a1e"/></linearGradient><filter id="bl"><feGaussianBlur stdDeviation="1.2"/></filter><filter id="bl2"><feGaussianBlur stdDeviation=".8"/></filter></defs><defs><linearGradient id="fy" x1="0" x2="0" y1="0" y2="1"><stop offset="0" stop-color="#fff36b"/><stop offset=".5" stop-color="#ffc81e"/><stop offset="1" stop-color="#f08a1e"/></linearGradient></defs><g><circle cx="192.2" cy="700.2" r="13.7" fill="url(#fo)"/><circle cx="194" cy="698.2" r="11.3" fill="url(#fg)"/><path d="M200 688.3q5.2 3.6 6 10q.6 5.5-2.2 10.3q-1.2 1.8-3 3.2q2.4-4.6 1.8-9.8q-.6-6.8-5.2-11.6q-1.2-1.3 0-2.4q1.2-.8 2.6.3z" fill="url(#fy)"/><path d="M178.5 700q-.2-5.5 2.6-9.6q-.3-2.4.8-4.2q1.2 1.6 2.7 2q3.4-1.3 6.3.3l-2 1.6q1.8.3 2.6 1.7q-2.3.3-3.3 1.9q2.2-.3 3 .8q-2.2 1.2-3 3q-.7 2.3 1 4q1.7 1.3 4.3.6l4.7-1.5q1.8-.2 2.4 1.2q-1.4 2.2-4.7 3.4q-3.3 1-6 .5q3.6 3 8.5 2.3q3.8-.8 6.6-4q-1.8 6.6-8 9.3q-7.8 2.6-14-2.5q-4.4-4.3-4.5-10.8z" fill="url(#fo)"/><path d="M186.3 704.2q2.3.9 4.8-.1l3.8-1.3q1.6-.1 2 .9q-1.5 2-4.3 2.9q-3.5.9-6.3-2.4z" fill="#f9a22a"/></g><g><rect x="235" y="685.3" width="30" height="14.7" fill="#c0c0c0"/><path d="M235.5 692.5h3M238.8 687v11M239.3 691l7.5-5M239.3 694l6.5 5" stroke="#000" stroke-width="1.3" fill="none"/><path d="M247.3 699.5l-3.2-.6 2-2.2z" fill="#000"/><path d="M250 689.5h4M250 692.7h4M250 695.9h4M261 692.7h4" stroke="#000" stroke-width="1.2"/><path d="M253.8 688.3h5q4.5 1 4.5 4.4q0 3.4-4.5 4.4h-5z" fill="#ff0" stroke="#000" stroke-width="1.2"/><rect x="235" y="700" width="30" height="15" rx="1.5" fill="#000090"/><rect x="236.8" y="701.8" width="15.5" height="11.8" fill="#fff"/><rect x="255" y="701.8" width="8.5" height="11.8" fill="#efe8d0"/><path d="M237 706.5l3.5-3.5 4 4.5 3.5-4.5 4 4.5" stroke="#1010ff" stroke-width="1" fill="none"/><path d="M237 708.2h15" stroke="#2de02d" stroke-width="1" stroke-dasharray="1.2 1.2"/><path d="M237 709.8h3.5v2.5h4v-2.5h4v2.5h3.5" stroke="#f0f" stroke-width="1" fill="none"/><path d="M255.8 703.5h2.4M255.8 706.5h2.4M255.8 709.3h2.4M260.2 703.5h2.4" stroke="#108080" stroke-width="1.2"/><path d="M255.8 712.2h2.4" stroke="#e02020" stroke-width="1.2"/><path d="M260.3 707h2.2M260.3 711.8h2.2" stroke="#000090" stroke-width="2"/></g><path d="M1090 703.3l4-4.3 4 4.3z" fill="#fff"/><g fill="none" stroke="#fff" stroke-width="1.1"><path d="M1110.6 694.5v14"/><path d="M1111.5 695.5h6.5v1.5h5.8q-.5 4-5 4.5h-1.3v1h-6z" fill="rgba(255,255,255,.45)"/></g><g><rect x="1138" y="695.2" width="8" height="12.8" rx="1" fill="none" stroke="#fff" stroke-width="1.1"/><rect x="1140.2" y="694" width="3.6" height="1.2" fill="#fff"/><rect x="1139.8" y="701.8" width="4.4" height="4.6" fill="#fff"/><rect x="1139.8" y="697" width="4.4" height="4.4" fill="rgba(120,80,20,.45)"/></g><g fill="#fff"><rect x="1155" y="704.5" width="1.7" height="2"/><rect x="1158" y="702.5" width="1.9" height="4"/><rect x="1161.1" y="700.5" width="1.9" height="6"/><rect x="1164.2" y="698.3" width="1.9" height="8.2"/><rect x="1167.3" y="696" width="1.9" height="10.5"/></g><g><path d="M1179.5 698.5h2.3l4-4v13.5l-4-4h-2.3z" fill="#fff"/><path d="M1188.3 698q2 3.2 0 6.5" stroke="#fff" stroke-width="1" fill="none"/></g></svg>
<div class="t" id="ttext"><span style="letter-spacing:-.58px">Noname - TR result13</span></div>
<div class="t m" style="left:6.4px"><span style="letter-spacing:-.55px">File</span></div>
<div class="t m" style="left:36.3px"><span style="letter-spacing:-.5px">Edit</span></div>
<div class="t m" style="left:68.4px"><span style="letter-spacing:-.75px">View</span></div>
<div class="t m" style="left:104.6px"><span style="letter-spacing:-.95px">Process</span></div>
<div class="t m" style="left:155.6px"><span style="letter-spacing:-.45px">Help</span></div>
<div class="t" id="tip"><span>Grid</span></div>
<div class="t" id="pct"><span>100%</span></div>
<div class="t ab" style="left:348px;color:#ff1010"><span style="transform:scaleX(.9)">a</span></div>
<div class="t ab" style="left:370.7px;color:#1010ff;top:47.6px"><span style="transform:scaleX(.9)">b</span></div>
<div class="t" style="left:205.4px;top:52.1px;font-family:'DejaVu Serif','Liberation Serif',serif;font-weight:bold;font-size:15.2px;opacity:.999"><span style="transform:scaleX(.94)">T</span></div>
<div class="t q" style="left:249px;top:62.3px"><span>?</span></div>
<div class="yl" style="top:586.6px">0.00</div><div class="yl" style="top:465.0px">100.00m</div><div class="yl" style="top:340.5px">200.00m</div><div class="yl" style="top:217.9px">300.00m</div><div class="yl" style="top:95.2px">400.00m</div><div class="xl" style="left:95.4px">5.00m</div><div class="xl" style="left:380.3px">5.50m</div><div class="xl" style="left:666.1px">6.00m</div><div class="xl" style="left:951.9px">6.50m</div><div class="xl" style="left:1236.8px">7.00m</div>
<div id="xt">Time (s)</div>
<div id="yt">Power (W)</div>
<div class="t" id="c1"><span>9:07</span></div>
<div class="t" id="c2"><span>2015.12.16.</span></div>
</body></html>
